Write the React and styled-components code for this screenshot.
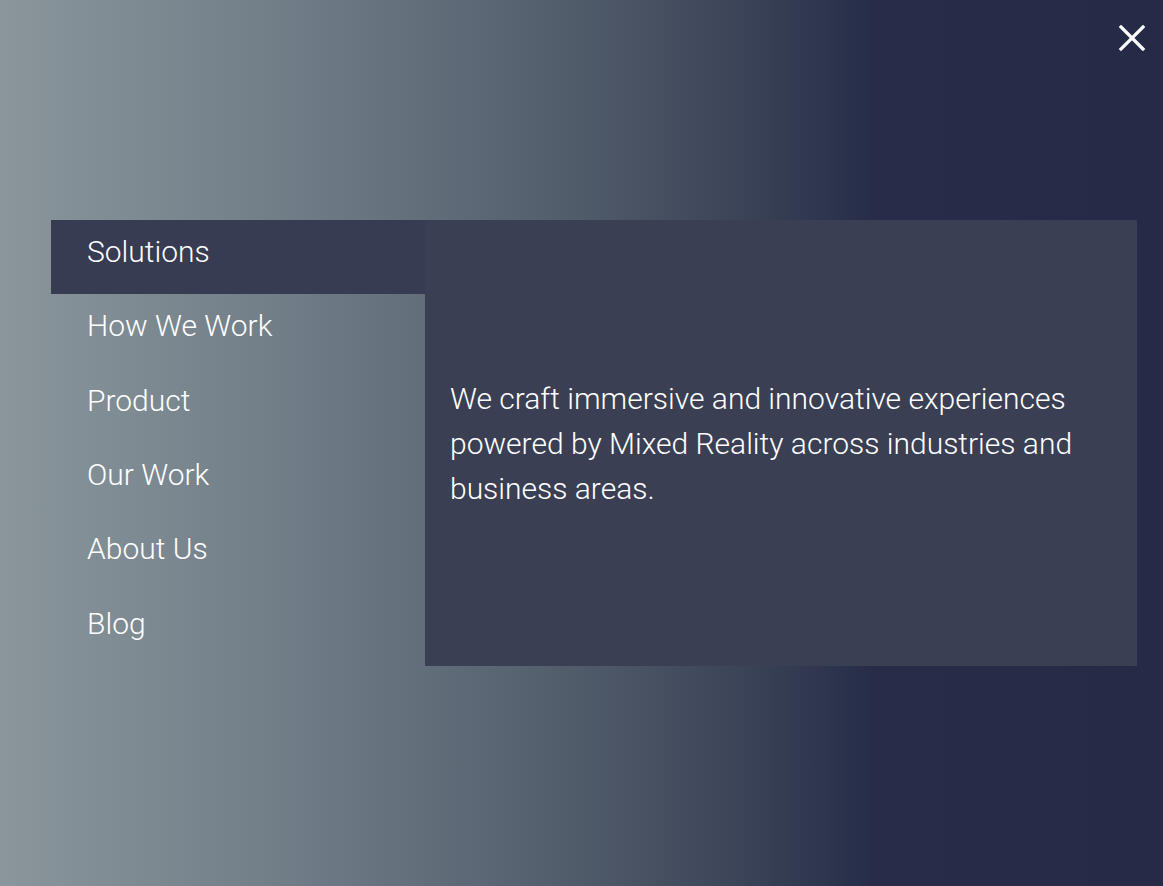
import { useState } from 'react'
import styled, { createGlobalStyle } from 'styled-components'

const items = ['Solutions', 'How We Work', 'Product', 'Our Work', 'About Us', 'Blog']

export default function App() {
    const [active, setActive] = useState(0)

    return (
        <>
            <GlobalStyle />
            <Overlay>
                <CloseButton aria-label='Close'>
                    <svg width='28' height='28' viewBox='0 0 28 28'>
                        <path d='M3 3 L25 25 M25 3 L3 25' stroke='#fff' strokeWidth='3.2' strokeLinecap='square' />
                    </svg>
                </CloseButton>
                <Menu>
                    <NavList>
                        {items.map((item, i) => (
                            <NavItem key={item} $active={i === active} onMouseEnter={() => setActive(i)}>
                                {item}
                            </NavItem>
                        ))}
                    </NavList>
                    <Panel>
                        <Description>
                            We craft immersive and innovative experiences powered by Mixed Reality across industries
                            and business areas.
                        </Description>
                    </Panel>
                </Menu>
            </Overlay>
        </>
    )
}

const GlobalStyle = createGlobalStyle`
    html, body {
        margin: 0;
        padding: 0;
    }
    body {
        font-family: Roboto, 'Liberation Sans', sans-serif;
        font-weight: 300;
    }
`

const Overlay = styled.div`
    position: relative;
    width: 100%;
    height: 886px;
    box-sizing: border-box;
    padding: 220px 26px 0 51px;
    background: linear-gradient(90deg, #8a969b 0%, #717e88 24%, #56616f 46%, #3e475a 62%, #272d48 75%, #252b46 100%);
`

const CloseButton = styled.button`
    position: absolute;
    top: 24px;
    right: 17px;
    width: 28px;
    height: 28px;
    padding: 0;
    border: none;
    background: none;
    cursor: pointer;
    display: flex;
`

const Menu = styled.div`
    display: flex;
    height: 446px;
`

const NavList = styled.ul`
    list-style: none;
    margin: 0;
    padding: 0;
    width: 374px;
    display: flex;
    flex-direction: column;
`

const NavItem = styled.li`
    flex: 1;
    box-sizing: border-box;
    padding: 15px 0 0 36px;
    font-size: 30px;
    line-height: 34px;
    color: #fff;
    background-color: ${({ $active }) => ($active ? '#373c53' : 'transparent')};
    cursor: pointer;
`

const Panel = styled.div`
    flex: 1;
    display: flex;
    align-items: center;
    padding: 0 40px 0 25px;
    background-color: #3a3f54;
`

const Description = styled.p`
    margin: 0;
    font-size: 30px;
    line-height: 45px;
    color: #fff;
`
